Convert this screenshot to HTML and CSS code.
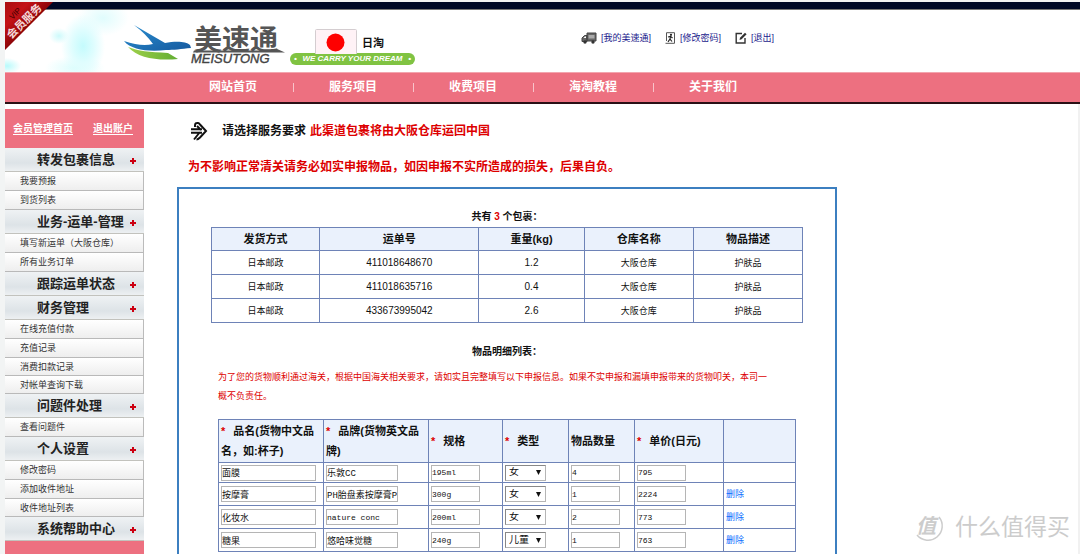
FILE: index.html
```html
<!DOCTYPE html>
<html lang="zh-CN">
<head>
<meta charset="utf-8">
<title>美速通 - 会员服务</title>
<link rel="stylesheet" href="styles.css">
</head>
<body>
<div class="page">
  <div class="topbar"></div>
  <svg class="ribbon" viewBox="0 0 48 48" width="48" height="48">
    <defs><linearGradient id="rb" x1="0" y1="0" x2="1" y2="1"><stop offset="0" stop-color="#a80f12"/><stop offset=".25" stop-color="#c41216"/><stop offset=".5" stop-color="#8d0508"/></linearGradient></defs>
    <path d="M0 0H48L0 48Z" fill="url(#rb)"/>
    <g transform="rotate(-45)" text-anchor="middle">
      <text class="ribbon-vip" x="-1" y="18">VIP</text>
      <text class="ribbon-name" x="0" y="31">会员服务</text>
    </g>
  </svg>

  <header class="header">
    <svg class="logo" viewBox="0 0 164 48" width="164" height="48" role="img" aria-label="美速通 MEISUTONG">
      <defs>
        <linearGradient id="bl" x1="0" y1="0" x2="1" y2="1"><stop offset="0" stop-color="#2b8fd0"/><stop offset="1" stop-color="#15599f"/></linearGradient>
        <linearGradient id="gr" x1="0" y1="0" x2="1" y2="0"><stop offset="0" stop-color="#9fd04a"/><stop offset="1" stop-color="#62ad33"/></linearGradient>
      </defs>
      <path d="M10 1L41 19C51 17 62 17 66 21L67 24C57 25 50 26 42 26C25 28 7 26 0 17C12 21 21 22 29 20Q22 10 10 1Z" fill="url(#bl)"/>
      <path d="M4 23C14 27 25 28 44 29L54 35C33 37 14 34 4 23Z" fill="url(#gr)"/>
      <text class="logo-cn" x="70" y="26">美速通</text>
      <path d="M70 26.500H150L152 24.500L161 28.500H69Z" fill="#555"/>
      <text class="logo-en" x="67" y="39">MEISUTONG</text>
    </svg>
    <div class="region">
      <div class="region-top">
        <svg class="flag" viewBox="0 0 42 25" width="42" height="25" role="img" aria-label="日本"><rect x=".5" y=".5" width="41" height="25" rx="1" fill="#fff2f6" stroke="#d4cdd0"/><circle cx="20.500" cy="13.500" r="9" fill="#fe0000"/></svg>
        <span class="region-name">日淘</span>
      </div>
      <div class="slogan"><span>•</span><span>WE CARRY YOUR DREAM</span><span>•</span></div>
    </div>
    <div class="account">
      <a href="#"><svg viewBox="0 0 16 12" width="16" height="12"><path d="M6 1H15V9H6ZM6 3.500H3.500L1 6V9.500H6Z" fill="#666" stroke="#444"/><path d="M7.500 3H13.500V6.500H7.500Z" fill="#aaa"/><path d="M2.500 6L4 4.500H5V6Z" fill="#fff"/><circle cx="4" cy="10" r="1.700" fill="#333"/><circle cx="12" cy="10" r="1.700" fill="#333"/></svg>[我的美速通]</a>
      <a href="#"><svg viewBox="0 0 11 12" width="11" height="12"><path d="M1.500 9V.7H9.500V11.300H.5" fill="none" stroke="#555"/><circle cx="6" cy="2.800" r="1.100" fill="#222"/><path d="M3 5L5.500 4.300L7.500 6M5.500 4.500L5 7L7 9.500M5 7L3 9.800" fill="none" stroke="#222" stroke-width="1.200"/></svg>[修改密码]</a>
      <a href="#"><svg viewBox="0 0 12 12" width="12" height="12"><path d="M7 1.500H1.200V11H10V6" fill="none" stroke="#333" stroke-width="1.400"/><path d="M4.500 8L5 5.800L10 .8L11.600 2.300L6.600 7.300Z" fill="#333"/></svg>[退出]</a>
    </div>
  </header>

  <nav class="nav">
    <a href="#">网站首页</a><a href="#">服务项目</a><a href="#">收费项目</a><a href="#">海淘教程</a><a href="#">关于我们</a>
  </nav>

  <div class="body">
    <aside class="sidebar">
      <div class="side-links"><a href="#">会员管理首页</a><a href="#">退出账户</a></div>
      <h2>转发包裹信息</h2>
      <ul><li><a href="#">我要预报</a></li><li><a href="#">到货列表</a></li></ul>
      <h2>业务-运单-管理</h2>
      <ul><li><a href="#">填写新运单（大阪仓库）</a></li><li><a href="#">所有业务订单</a></li></ul>
      <h2>跟踪运单状态</h2>
      <h2>财务管理</h2>
      <ul><li><a href="#">在线充值付款</a></li><li><a href="#">充值记录</a></li><li><a href="#">消费扣款记录</a></li><li><a href="#">对帐单查询下载</a></li></ul>
      <h2>问题件处理</h2>
      <ul><li><a href="#">查看问题件</a></li></ul>
      <h2>个人设置</h2>
      <ul><li><a href="#">修改密码</a></li><li><a href="#">添加收件地址</a></li><li><a href="#">收件地址列表</a></li></ul>
      <h2>系统帮助中心</h2>
      <div class="side-end"></div>
    </aside>

    <main class="main">
      <h1 class="title">
        <svg viewBox="0 0 18 20" width="18" height="20"><path d="M5 6V4.500Q5 1.500 8 2Q9 2.200 10 3.500L16 10L10 16.500Q8 18.500 6.500 18.500" fill="none" stroke="#111" stroke-width="2"/><path d="M1 8.300H12M1 11.700H12M10 11L4 18.500M7 5L11 9" fill="none" stroke="#111" stroke-width="2"/></svg>
        <span>请选择服务要求</span><span class="red">此渠道包裹将由大阪仓库运回中国</span>
      </h1>
      <p class="notice red">为不影响正常清关请务必如实申报物品，如因申报不实所造成的损失，后果自负。</p>

      <section class="panel">
        <h3>共有 <span class="red">3</span> 个包裹：</h3>
        <table class="grid parcels">
          <colgroup><col class="p1"><col class="p2"><col class="p3"><col class="p4"><col class="p5"></colgroup>
          <thead><tr><th>发货方式</th><th>运单号</th><th>重量(kg)</th><th>仓库名称</th><th>物品描述</th></tr></thead>
          <tbody>
            <tr><td>日本邮政</td><td class="num">411018648670</td><td class="num">1.2</td><td>大阪仓库</td><td>护肤品</td></tr>
            <tr><td>日本邮政</td><td class="num">411018635716</td><td class="num">0.4</td><td>大阪仓库</td><td>护肤品</td></tr>
            <tr><td>日本邮政</td><td class="num">433673995042</td><td class="num">2.6</td><td>大阪仓库</td><td>护肤品</td></tr>
          </tbody>
        </table>

        <h3 class="second">物品明细列表：</h3>
        <p class="declare red">为了您的货物顺利通过海关，根据中国海关相关要求，请如实且完整填写以下申报信息。如果不实申报和漏填申报带来的货物叩关，本司一<br>概不负责任。</p>
        <table class="grid items">
          <colgroup><col class="i1"><col class="i1"><col class="i2"><col class="i3"><col class="i3"><col class="i4"><col class="i5"></colgroup>
          <thead><tr><th><i>*</i>品名(货物中文品名，如:杯子)</th><th><i>*</i>品牌(货物英文品牌)</th><th><i>*</i>规格</th><th><i>*</i>类型</th><th>物品数量</th><th><i>*</i>单价(日元)</th><th></th></tr></thead>
          <tbody>
            <tr class="first">
              <td><input class="w-name" aria-label="品名" value="面膜"></td><td><input class="w-brand" aria-label="品牌" value="乐敦CC"></td><td><input class="w-num" aria-label="规格" value="195ml"></td>
              <td><select aria-label="类型"><option>女</option><option>儿童</option></select></td><td><input class="w-num" aria-label="物品数量" value="4"></td><td><input class="w-num" aria-label="单价(日元)" value="795"></td><td></td>
            </tr>
            <tr>
              <td><input class="w-name" aria-label="品名" value="按摩膏"></td><td><input class="w-brand" aria-label="品牌" value="PH胎盘素按摩膏P"></td><td><input class="w-num" aria-label="规格" value="300g"></td>
              <td><select aria-label="类型"><option>女</option><option>儿童</option></select></td><td><input class="w-num" aria-label="物品数量" value="1"></td><td><input class="w-num" aria-label="单价(日元)" value="2224"></td><td><a href="#">删除</a></td>
            </tr>
            <tr>
              <td><input class="w-name" aria-label="品名" value="化妆水"></td><td><input class="w-brand latin" aria-label="品牌" value="nature conc"></td><td><input class="w-num" aria-label="规格" value="200ml"></td>
              <td><select aria-label="类型"><option>女</option><option>儿童</option></select></td><td><input class="w-num" aria-label="物品数量" value="2"></td><td><input class="w-num" aria-label="单价(日元)" value="773"></td><td><a href="#">删除</a></td>
            </tr>
            <tr>
              <td><input class="w-name" aria-label="品名" value="糖果"></td><td><input class="w-brand" aria-label="品牌" value="悠哈味觉糖"></td><td><input class="w-num" aria-label="规格" value="240g"></td>
              <td><select aria-label="类型"><option>女</option><option selected>儿童</option></select></td><td><input class="w-num" aria-label="物品数量" value="1"></td><td><input class="w-num" aria-label="单价(日元)" value="763"></td><td><a href="#">删除</a></td>
            </tr>
          </tbody>
        </table>
      </section>
    </main>
  </div>

  <div class="watermark">
    <svg viewBox="0 0 30 30" width="30" height="30"><path d="M25 5A13.500 13.500 0 0 1 3 23" fill="none" stroke="#ccc" stroke-width="1.500"/><text class="wm-mark" x="12" y="21" text-anchor="middle">值</text></svg>
    <span>什么值得买</span>
  </div>
</div>
</body>
</html>
```
FILE: styles.css
```css
* { box-sizing: border-box; }

body {
  margin: 0;
  background: #f2f4f4;
  color: #111;
  font: 9px/18px "Liberation Sans", "Noto Sans CJK SC", sans-serif;
}

h1, h2, h3, p, ul { margin: 0; padding: 0; }
ul { list-style: none; }
a { color: inherit; text-decoration: none; }
.red { color: #d00; }

.page {
  position: relative;
  display: flex;
  flex-direction: column;
  height: 100vh;
  overflow: hidden;
  padding: 2px 0 0 5px;
}

.topbar { flex: none; height: 8px; background: #000926; border-bottom: 1px solid #777; }

.ribbon { position: absolute; top: 2px; left: 5px; overflow: visible; }
.ribbon-vip { font: 8px "Liberation Sans", sans-serif; fill: #3d0000; }
.ribbon-name { font: bold 11px "Noto Sans CJK SC", sans-serif; fill: #f5dada; }

/* header */
.header {
  flex: none;
  display: flex;
  align-items: flex-start;
  height: 62px;
  padding-left: 119px;
  background:
    radial-gradient(ellipse 22px 32px at 78px 36px, #c4fbfd 0, #dffdfe 50%, transparent 100%),
    radial-gradient(ellipse 26px 18px at 98px 8px, #e0fcfd 0, transparent 100%),
    radial-gradient(ellipse 10px 8px at 54px 26px, #cdfafb 0, transparent 100%),
    radial-gradient(ellipse 14px 8px at 2px 56px, #b8fafb 0, transparent 100%),
    radial-gradient(ellipse 30px 12px at 70px 58px, #dcfdfd 0, transparent 100%),
    #fff;
}
.logo { flex: none; margin-top: 14px; overflow: visible; }
.logo-cn { font: bold 28px "Noto Sans CJK SC", sans-serif; fill: #555; }
.logo-en { font: italic 13px "Liberation Sans", sans-serif; fill: #444; stroke: #444; stroke-width: .4px; }

.region { width: 125px; margin: 19px 0 0 2px; }
.region-top { display: flex; align-items: center; gap: 5px; padding-left: 25px; height: 24px; }
.region-name { padding-top: 3px; font-size: 11px; font-weight: bold; }
.slogan {
  display: flex;
  justify-content: space-between;
  padding: 0 4px;
  border-radius: 6px;
  background: #80c342;
  color: #fff;
  font: italic bold 8px/12px "Liberation Sans", sans-serif;
  white-space: nowrap;
}

.account { display: flex; gap: 14px; margin: 19px 0 0 166px; color: #1a1a8c; }
.account a { display: flex; align-items: center; gap: 4px; white-space: nowrap; }

/* main navigation */
.nav {
  flex: none;
  display: flex;
  height: 32px;
  padding-left: 168px;
  background: #ed7080;
  border-top: 1px solid #f3a5ae;
  border-bottom: 2px solid #2a1015;
  color: #fff;
  font-size: 12px;
  font-weight: bold;
  line-height: 29px;
}
.nav a { width: 120px; text-align: center; position: relative; }
.nav a + a::before {
  content: "";
  position: absolute;
  left: 0;
  top: 10px;
  height: 9px;
  border-left: 1px solid #f8c3ca;
}

.body { flex: 1; display: flex; min-height: 0; background: #fff; border-right: 2px solid #f1f1f1; }

/* sidebar */
.sidebar { flex: none; display: flex; flex-direction: column; width: 139px; padding-top: 5px; }
.side-links {
  flex: none;
  display: flex;
  justify-content: space-between;
  height: 39px;
  padding: 0 11px 0 8px;
  background: #ed7080;
  color: #fff;
  font-size: 10px;
  font-weight: bold;
  line-height: 39px;
}
.side-links a { text-decoration: underline; text-underline-offset: 2px; }

.sidebar h2 {
  flex: none;
  position: relative;
  height: 24px;
  padding-left: 32px;
  border-bottom: 1px solid #c2c2bd;
  background: linear-gradient(#eff2f4, #dde3e7 65%, #edf0f2);
  color: #222;
  font-size: 13px;
  line-height: 23px;
  white-space: nowrap;
}
.sidebar h2::before,
.sidebar h2::after {
  content: "";
  position: absolute;
  background: #cc0011;
}
.sidebar h2::before { right: 8px; top: 12px; width: 6px; height: 2px; }
.sidebar h2::after { right: 10px; top: 10px; width: 2px; height: 6px; }

.sidebar li {
  height: 19px;
  padding-left: 15px;
  border-right: 1px solid #bbb;
  border-bottom: 1px solid #b9b9b9;
  background: linear-gradient(#fff, #eee);
  color: #333;
}
.sidebar li:nth-child(n + 3) { margin-top: -1px; border-top: 1px solid #b9b9b9; }
.side-end { flex: 1; background: #ed7080; }

/* content */
.main { flex: 1; display: flex; flex-direction: column; min-width: 0; padding: 9px 0 0 33px; }
.title { display: flex; align-items: center; gap: 4px; padding-left: 13px; font-size: 12px; line-height: 36px; }
.title svg { margin-right: 10px; }
.notice { padding-left: 11px; font-size: 12px; font-weight: bold; line-height: 36px; }

.panel {
  flex: 1;
  max-width: 660px;
  margin-top: 2px;
  padding: 18px 32px 0;
  border: 2px solid #3c7fc0;
  border-bottom: 0;
}
.panel h3 { font-size: 10px; line-height: 20px; text-align: center; }
.panel h3.second { margin-top: 19px; }
.declare { margin: 6px 0 13px 7px; line-height: 19px; }

.grid { width: 100%; table-layout: fixed; border-collapse: collapse; }
.grid th, .grid td { height: 23px; padding: 0; border: 1px solid #6e83b7; }
.grid th { background: #eaf1fc; font-size: 11px; }
.parcels { text-align: center; }
.parcels td { height: 24px; }
.parcels .num { font-size: 10px; }
.p1 { width: 108px; }
.p2 { width: 159px; }
.p3 { width: 105px; }
.p4, .p5 { width: 109px; }

.items { width: auto; min-width: calc(100% - 14px); margin: 0 7px; }
.items th { height: 43px; padding-left: 2px; line-height: 20px; text-align: left; }
.items th i { margin-right: 8px; color: #d00; font-style: normal; }
.items td { padding-left: 2px; line-height: 15px; }
.items .first td { height: 20px; }
.items td a { color: #0a6cff; }
.i1 { width: 105px; }
.i2 { width: 74px; }
.i3 { width: 66px; }
.i4 { width: 89px; }
.i5 { width: 72px; }

input, select {
  display: block;
  height: 16px;
  margin: 0;
  padding: 0;
  border: 1px solid #b5b5b5;
  border-radius: 0;
  background: #fff;
  color: #111;
  font: 9px "Liberation Mono", "Noto Sans CJK SC", monospace;
}
.w-name { width: 95px; }
.w-brand { width: 72px; }
.w-num { width: 49px; }
.w-num, .latin { font-size: 8px; }
select {
  width: 41px;
  padding-left: 3px;
  border-top-color: #888;
  border-left-color: #888;
  appearance: none;
  background: #fff url("data:image/svg+xml,%3Csvg xmlns='http://www.w3.org/2000/svg' width='5' height='5'%3E%3Cpath d='M0 0H5L2.500 5Z' fill='%23111'/%3E%3C/svg%3E") no-repeat right 4px center;
  font-size: 10px;
}

.watermark {
  position: absolute;
  right: 10px;
  bottom: 12px;
  display: flex;
  align-items: center;
  gap: 11px;
  color: #ccc;
  font-size: 23px;
  line-height: 30px;
}
.watermark svg { overflow: visible; }
.wm-mark { font: italic bold 20px "Noto Sans CJK SC", sans-serif; fill: #ccc; }
```
